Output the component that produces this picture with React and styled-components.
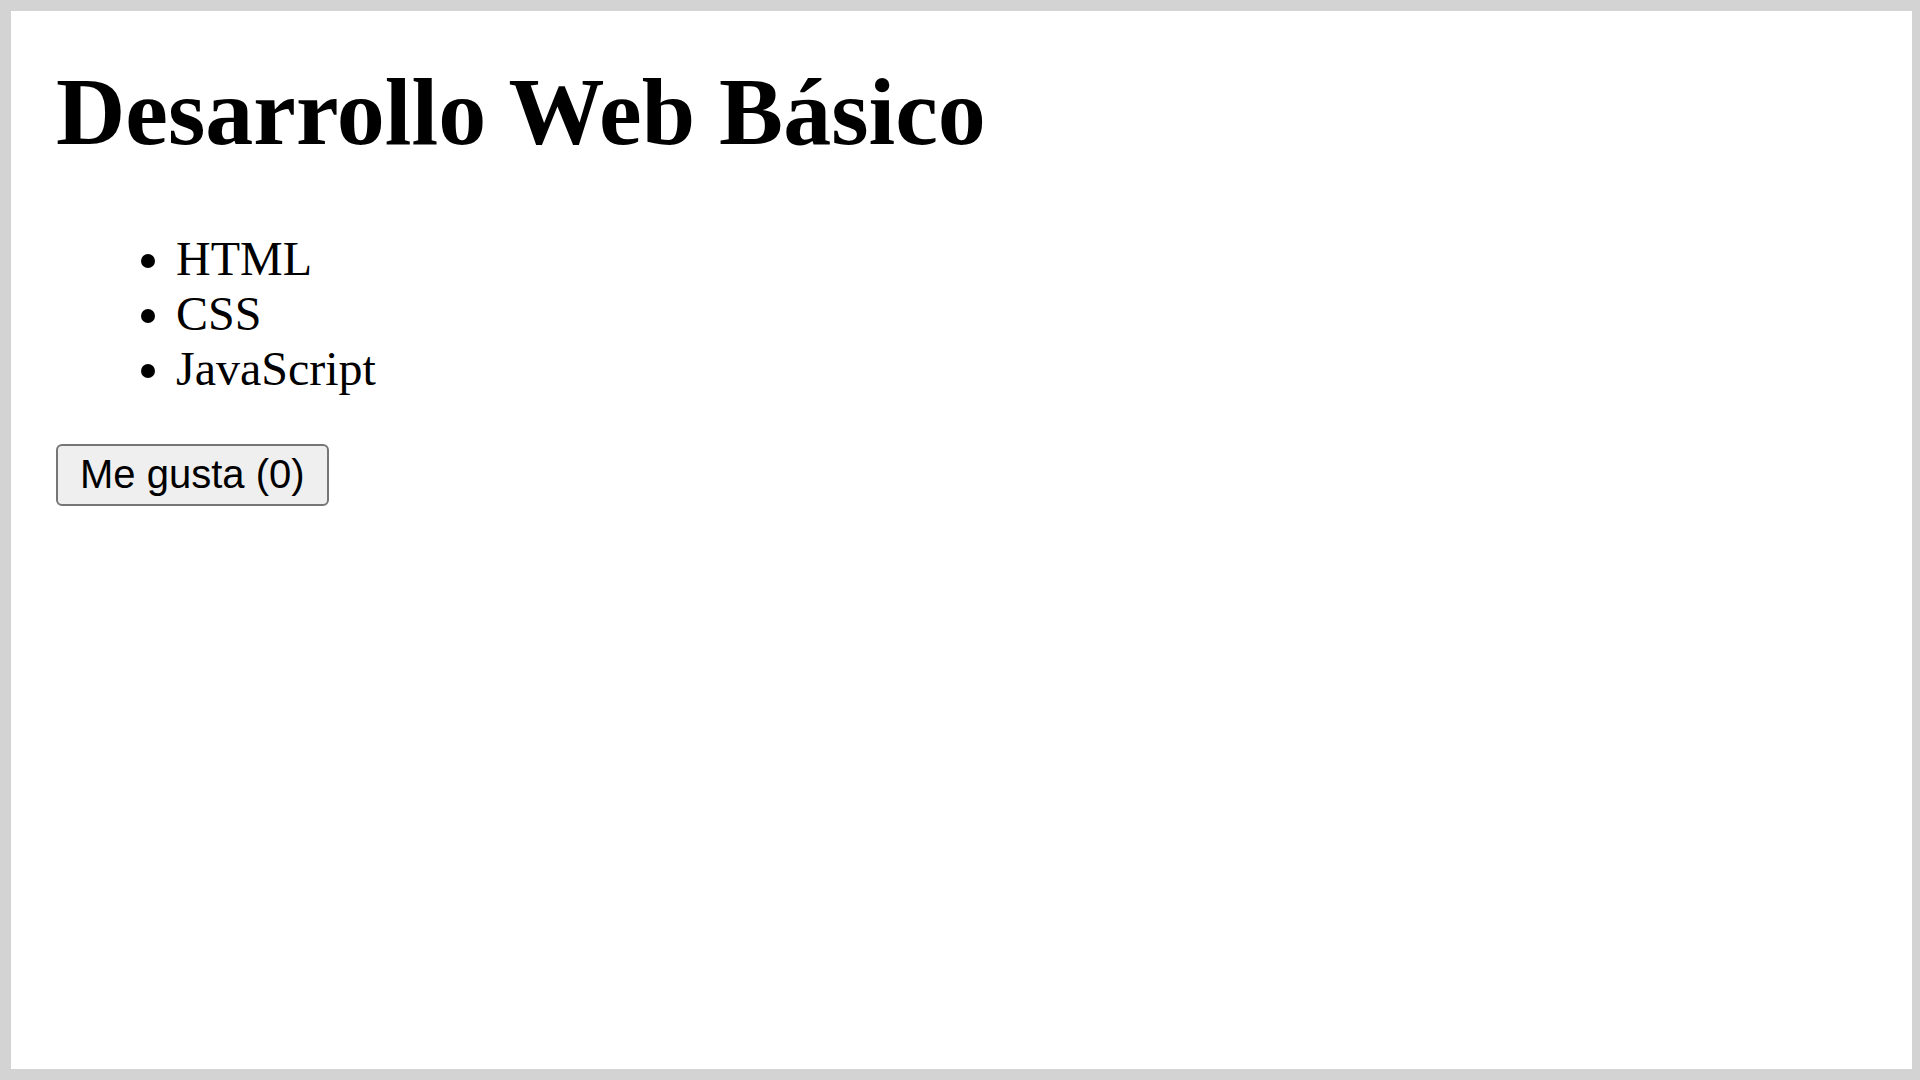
import React, { useState } from "react";
import styled, { createGlobalStyle } from "styled-components";

const GlobalStyle = createGlobalStyle`
  html, body {
    margin: 0;
    padding: 0;
  }
  body {
    background: #d3d3d3;
    font-family: "Liberation Serif", "Times New Roman", serif;
    color: #000;
  }
`;

const Frame = styled.div`
  padding: 11px 8px 11px 11px;
  box-sizing: border-box;
  width: 1920px;
  height: 1080px;
`;

const Page = styled.main`
  background: #fff;
  height: 100%;
  box-sizing: border-box;
  padding: 45px 0 0 45px;
  display: flow-root;
`;

const Title = styled.h1`
  margin: 0 0 64px;
  font-family: "Liberation Serif", "Times New Roman", serif;
  font-weight: bold;
  font-size: 96px;
  line-height: normal;
`;

const TopicList = styled.ul`
  margin: 0 0 48px;
  padding-left: 120px;
  font-size: 48px;
  line-height: normal;
  list-style: disc;
`;

const Topic = styled.li`
  margin: 0;
`;

const LikeButton = styled.button`
  font-family: "Liberation Sans", Arial, sans-serif;
  font-size: 40px;
  line-height: normal;
  padding: 6px 22px 7px;
  margin: 0;
  background: #efefef;
  color: #000;
  border: 2px solid #767676;
  border-radius: 6px;
  cursor: pointer;
`;

export default function App() {
  const [likes, setLikes] = useState(0);
  return (
    <>
      <GlobalStyle />
      <Frame>
        <Page>
          <Title>Desarrollo Web Básico</Title>
          <TopicList>
            <Topic>HTML</Topic>
            <Topic>CSS</Topic>
            <Topic>JavaScript</Topic>
          </TopicList>
          <LikeButton onClick={() => setLikes(likes + 1)}>
            Me gusta ({likes})
          </LikeButton>
        </Page>
      </Frame>
    </>
  );
}
